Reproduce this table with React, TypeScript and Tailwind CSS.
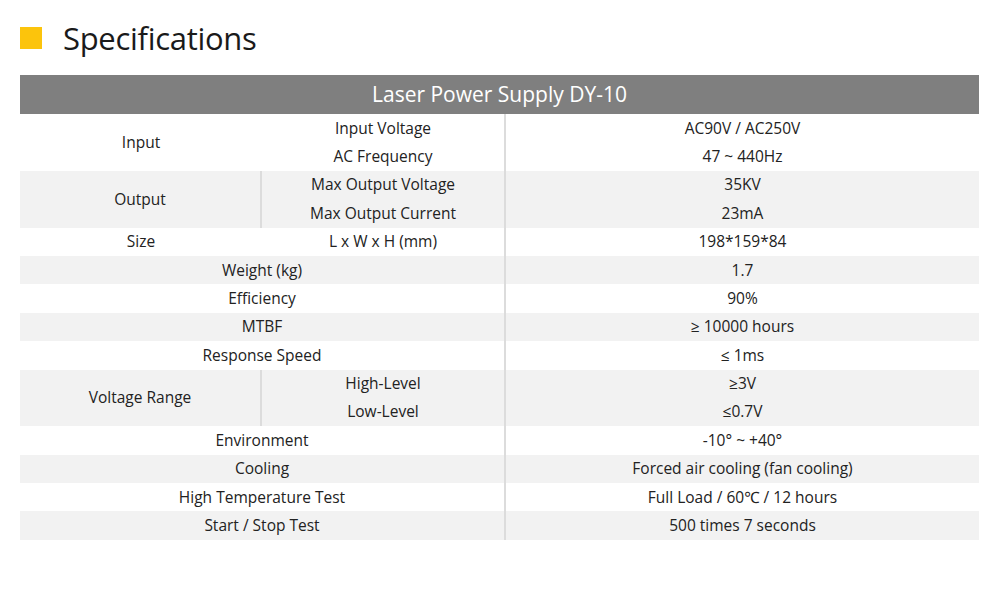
import React from 'react';

type Row =
  | { kind: 'group'; label: string; items: [string, string][]; divider?: boolean }
  | { kind: 'single'; label: string; sub: string; value: string }
  | { kind: 'wide'; label: string; value: string };

const rows: Row[] = [
  { kind: 'group', label: 'Input', items: [['Input Voltage', 'AC90V / AC250V'], ['AC Frequency', '47 ~ 440Hz']] },
  { kind: 'group', label: 'Output', divider: true, items: [['Max Output Voltage', '35KV'], ['Max Output Current', '23mA']] },
  { kind: 'single', label: 'Size', sub: 'L x W x H (mm)', value: '198*159*84' },
  { kind: 'wide', label: 'Weight (kg)', value: '1.7' },
  { kind: 'wide', label: 'Efficiency', value: '90%' },
  { kind: 'wide', label: 'MTBF', value: '≥ 10000 hours' },
  { kind: 'wide', label: 'Response Speed', value: '≤ 1ms' },
  { kind: 'group', label: 'Voltage Range', divider: true, items: [['High-Level', '≥3V'], ['Low-Level', '≤0.7V']] },
  { kind: 'wide', label: 'Environment', value: '-10° ~ +40°' },
  { kind: 'wide', label: 'Cooling', value: 'Forced air cooling (fan cooling)' },
  { kind: 'wide', label: 'High Temperature Test', value: 'Full Load / 60℃ / 12 hours' },
  { kind: 'wide', label: 'Start / Stop Test', value: '500 times 7 seconds' },
];

function ValueCell({ children }: { children: React.ReactNode }) {
  return (
    <div className="flex-1 h-[28.4px] flex items-center justify-center border-l-2 border-[#dcdcdc]">
      {children}
    </div>
  );
}

export default function App() {
  return (
    <div
      className="w-[1000px] h-[590px] bg-white text-[#222] px-5 pt-[27px]"
      style={{ fontFamily: '"Open Sans", "Noto Sans", sans-serif' }}
    >
      <div className="flex items-center gap-[21px] h-[22px]">
        <div className="w-[22px] h-[22px] bg-[#fcc40c]" />
        <h1 className="text-[31px] tracking-[-0.3px] leading-none text-[#1a1a1a]">Specifications</h1>
      </div>

      <div className="mt-[26px] w-[959px]">
        <div className="h-[39px] bg-[#7f7f7f] text-white text-[21px] flex items-center justify-center">
          Laser Power Supply DY-10
        </div>
        <div className="text-[15.5px]">
          {rows.map((row, i) => {
            const bg = i % 2 === 1 ? 'bg-[#f2f2f2]' : 'bg-white';
            if (row.kind === 'group') {
              return (
                <div key={i} className={`flex ${bg}`}>
                  <div className={`w-[242px] flex items-center justify-center ${row.divider ? 'border-r-2 border-[#dcdcdc]' : ''}`}>
                    {row.label}
                  </div>
                  <div className="flex-1 flex flex-col">
                    {row.items.map(([sub, value]) => (
                      <div key={sub} className="flex">
                        <div className="w-[242px] h-[28.4px] flex items-center justify-center">{sub}</div>
                        <ValueCell>{value}</ValueCell>
                      </div>
                    ))}
                  </div>
                </div>
              );
            }
            if (row.kind === 'single') {
              return (
                <div key={i} className={`flex ${bg}`}>
                  <div className="w-[242px] h-[28.4px] flex items-center justify-center">{row.label}</div>
                  <div className="w-[242px] h-[28.4px] flex items-center justify-center">{row.sub}</div>
                  <ValueCell>{row.value}</ValueCell>
                </div>
              );
            }
            return (
              <div key={i} className={`flex ${bg}`}>
                <div className="w-[484px] h-[28.4px] flex items-center justify-center">{row.label}</div>
                <ValueCell>{row.value}</ValueCell>
              </div>
            );
          })}
        </div>
      </div>
    </div>
  );
}
